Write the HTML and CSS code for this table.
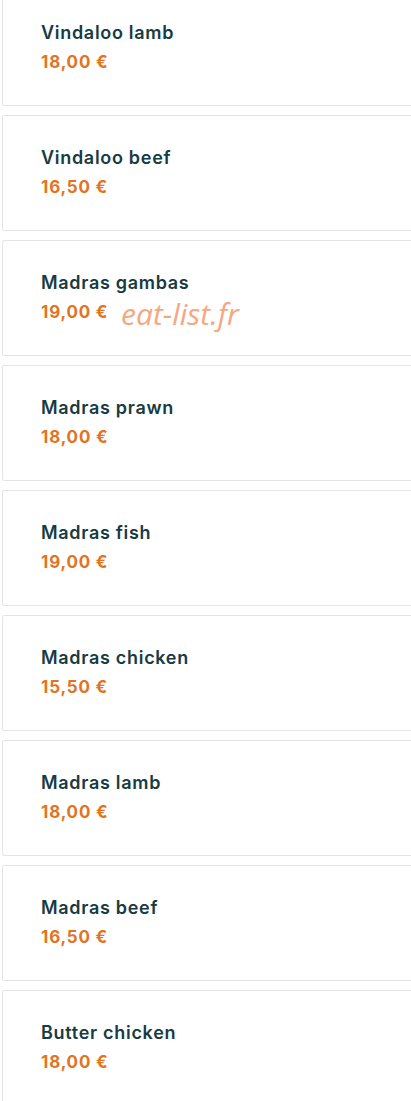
FILE: index.html
```html
<!DOCTYPE html>
<html lang="fr">
  <head>
    <meta charset="UTF-8" />
    <meta name="viewport" content="width=device-width, initial-scale=1.0" />
    <title>Menu</title>
    <link rel="stylesheet" href="styles.css">
  </head>
  <body>
    <div class="menu">
      <div class="dish">
        <div class="dish-name">Vindaloo lamb</div>
        <div class="dish-price">18,00 €</div>
      </div>
      <div class="dish">
        <div class="dish-name">Vindaloo beef</div>
        <div class="dish-price">16,50 €</div>
      </div>
      <div class="dish">
        <div class="dish-name">Madras gambas</div>
        <div class="dish-price">19,00 €</div>
        <div class="watermark">eat-list.fr</div>
      </div>
      <div class="dish">
        <div class="dish-name">Madras prawn</div>
        <div class="dish-price">18,00 €</div>
      </div>
      <div class="dish">
        <div class="dish-name">Madras fish</div>
        <div class="dish-price">19,00 €</div>
      </div>
      <div class="dish">
        <div class="dish-name">Madras chicken</div>
        <div class="dish-price">15,50 €</div>
      </div>
      <div class="dish">
        <div class="dish-name">Madras lamb</div>
        <div class="dish-price">18,00 €</div>
      </div>
      <div class="dish">
        <div class="dish-name">Madras beef</div>
        <div class="dish-price">16,50 €</div>
      </div>
      <div class="dish">
        <div class="dish-name">Butter chicken</div>
        <div class="dish-price">18,00 €</div>
      </div>
    </div>
  </body>
</html>
```

FILE: styles.css
```css
body {
  margin: 0;
  background: #fff;
  font-family: Inter, "Noto Sans", sans-serif;
  overflow: hidden;
}

.menu {
  margin-top: -10px;
  padding-left: 2px;
  display: flex;
  flex-direction: column;
  gap: 9px;
}

/* une carte par plat */
.dish {
  position: relative;
  box-sizing: border-box;
  width: 420px;
  height: 116px;
  padding: 30px 0 0 38px;
  border: 1px solid #e4e4e2;
  border-radius: 2px;
}

.dish-name {
  font-size: 18px;
  line-height: 24px;
  font-weight: 600;
  letter-spacing: 0.7px;
  color: #173b42;
}

.dish-price {
  margin-top: 5px;
  font-size: 17px;
  line-height: 24px;
  font-weight: 700;
  letter-spacing: 0.8px;
  color: #e3741f;
}

.watermark {
  position: absolute;
  left: 118px;
  top: 52px;
  font-family: "Open Sans", sans-serif;
  font-style: italic;
  font-size: 30px;
  color: #f6a77f;
}
```
